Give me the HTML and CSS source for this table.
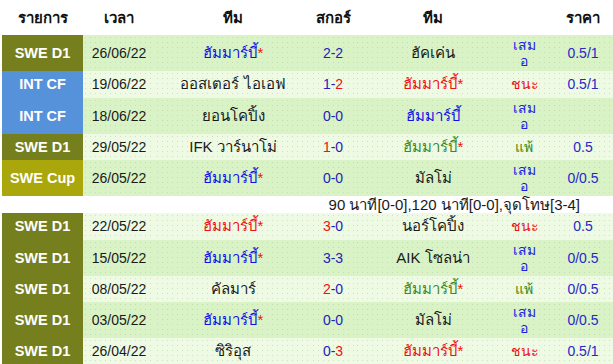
FILE: index.html
```html
<!DOCTYPE html>
<html lang="th">
<head>
<meta charset="utf-8">
<title>ผลการแข่งขัน</title>
<link rel="stylesheet" href="styles.css">
</head>
<body>
<table class="results">
  <colgroup>
    <col class="c-league"><col class="c-date"><col class="c-team"><col class="c-score"><col class="c-team2"><col class="c-res"><col class="c-odds">
  </colgroup>
  <thead>
    <tr class="head">
      <th>รายการ</th><th>เวลา</th><th>ทีม</th><th>สกอร์</th><th>ทีม</th><th></th><th class="odds">ราคา</th>
    </tr>
  </thead>
  <tbody>
    <tr class="row dark">
      <td class="lg d1">SWE D1</td><td class="date">26/06/22</td>
      <td class="team draw">ฮัมมาร์บี้<span class="star">*</span></td>
      <td class="score">2-2</td>
      <td class="team">ฮัคเค่น</td>
      <td class="res draw">เสม<br>อ</td><td class="odds">0.5/1</td>
    </tr>
    <tr class="row light">
      <td class="lg cf">INT CF</td><td class="date">19/06/22</td>
      <td class="team">ออสเตอร์ ไอเอฟ</td>
      <td class="score">1-<span class="win">2</span></td>
      <td class="team win">ฮัมมาร์บี้*</td>
      <td class="res win">ชนะ</td><td class="odds">0.5/1</td>
    </tr>
    <tr class="row dark">
      <td class="lg cf">INT CF</td><td class="date">18/06/22</td>
      <td class="team">ยอนโคปิ้ง</td>
      <td class="score">0-0</td>
      <td class="team draw">ฮัมมาร์บี้</td>
      <td class="res draw">เสม<br>อ</td><td class="odds"></td>
    </tr>
    <tr class="row light">
      <td class="lg d1">SWE D1</td><td class="date">29/05/22</td>
      <td class="team">IFK วาร์นาโม่</td>
      <td class="score"><span class="win">1</span>-0</td>
      <td class="team lose">ฮัมมาร์บี้<span class="star">*</span></td>
      <td class="res lose">แพ้</td><td class="odds">0.5</td>
    </tr>
    <tr class="row dark">
      <td class="lg cup">SWE Cup</td><td class="date">26/05/22</td>
      <td class="team draw">ฮัมมาร์บี้<span class="star">*</span></td>
      <td class="score">0-0</td>
      <td class="team">มัลโม่</td>
      <td class="res draw">เสม<br>อ</td><td class="odds">0/0.5</td>
    </tr>
    <tr class="note">
      <td colspan="7">90 นาที[0-0],120 นาที[0-0],จุดโทษ[3-4]</td>
    </tr>
    <tr class="row light">
      <td class="lg d1">SWE D1</td><td class="date">22/05/22</td>
      <td class="team win">ฮัมมาร์บี้*</td>
      <td class="score"><span class="win">3</span>-0</td>
      <td class="team">นอร์โคปิ้ง</td>
      <td class="res win">ชนะ</td><td class="odds">0.5</td>
    </tr>
    <tr class="row dark">
      <td class="lg d1">SWE D1</td><td class="date">15/05/22</td>
      <td class="team draw">ฮัมมาร์บี้<span class="star">*</span></td>
      <td class="score">3-3</td>
      <td class="team">AIK โซลน่า</td>
      <td class="res draw">เสม<br>อ</td><td class="odds">0/0.5</td>
    </tr>
    <tr class="row light">
      <td class="lg d1">SWE D1</td><td class="date">08/05/22</td>
      <td class="team">คัลมาร์</td>
      <td class="score"><span class="win">2</span>-0</td>
      <td class="team lose">ฮัมมาร์บี้<span class="star">*</span></td>
      <td class="res lose">แพ้</td><td class="odds">0/0.5</td>
    </tr>
    <tr class="row dark">
      <td class="lg d1">SWE D1</td><td class="date">03/05/22</td>
      <td class="team draw">ฮัมมาร์บี้<span class="star">*</span></td>
      <td class="score">0-0</td>
      <td class="team">มัลโม่</td>
      <td class="res draw">เสม<br>อ</td><td class="odds">0/0.5</td>
    </tr>
    <tr class="row light">
      <td class="lg d1">SWE D1</td><td class="date">26/04/22</td>
      <td class="team">ซิริอุส</td>
      <td class="score">0-<span class="win">3</span></td>
      <td class="team win">ฮัมมาร์บี้*</td>
      <td class="res win">ชนะ</td><td class="odds">0.5/1</td>
    </tr>
  </tbody>
</table>
</body>
</html>
```

FILE: styles.css
```css
html, body {
  margin: 0;
  padding: 0;
  background: #ffffff;
}
body {
  padding-left: 2px;
  font-family: "Liberation Sans", Arial, "Noto Sans", sans-serif;
  font-size: 14px;
  color: #1a1a1a;
}
.results {
  border-collapse: collapse;
  border-spacing: 0;
  width: 611px;
  table-layout: fixed;
}
.c-league { width: 81px; }
.c-date { width: 72px; }
.c-team { width: 156px; }
.c-score { width: 44px; }
.c-team2 { width: 156px; }
.c-res { width: 26px; }
.c-odds { width: 76px; }

th, td {
  padding: 0;
  text-align: center;
  vertical-align: middle;
  white-space: nowrap;
}
.head { height: 35px; }
.head th {
  font-size: 15px;
  font-weight: bold;
  color: #111111;
}
.odds { padding-left: 16px; }

.row { height: 26.5px; }
.row.dark td {
  background-color: #d9f3c7;
  background-image: radial-gradient(circle, rgba(170, 205, 150, 0.45) 0.6px, transparent 0.9px);
  background-size: 5px 5px;
}
.row.light td {
  background-color: #eefae4;
  background-image: radial-gradient(circle, rgba(175, 210, 160, 0.55) 0.6px, transparent 0.9px);
  background-size: 5px 5px;
}
.row td.lg {
  background-image: none;
  color: #ffffff;
  font-weight: bold;
  font-size: 14.5px;
}
.row td.d1 { background-color: #767f1e; }
.row td.cf { background-color: #5692da; }
.row td.cup { background-color: #a9a70c; }

.date { color: #1a1a1a; }
.team {
  color: #1a1a1a;
  font-size: 15px;
}
.team.draw { color: #1010e8; }
.team.win { color: #f01010; }
.team.lose { color: #3c8a18; }
.star { color: #f01010; }
.score { color: #2222b8; }
.score .win { color: #f01010; }
.res {
  line-height: 16px;
  padding: 2px 0;
  white-space: normal;
}
.res.draw { color: #2020e0; }
.res.win { color: #f01010; }
.res.lose { color: #3c8a18; }
td.odds { color: #2828c8; }

.note { height: 17px; }
.note td {
  background: #ffffff;
  text-align: right;
  padding-right: 33px;
  line-height: 17px;
  font-size: 15px;
  color: #1a1a1a;
}
```
